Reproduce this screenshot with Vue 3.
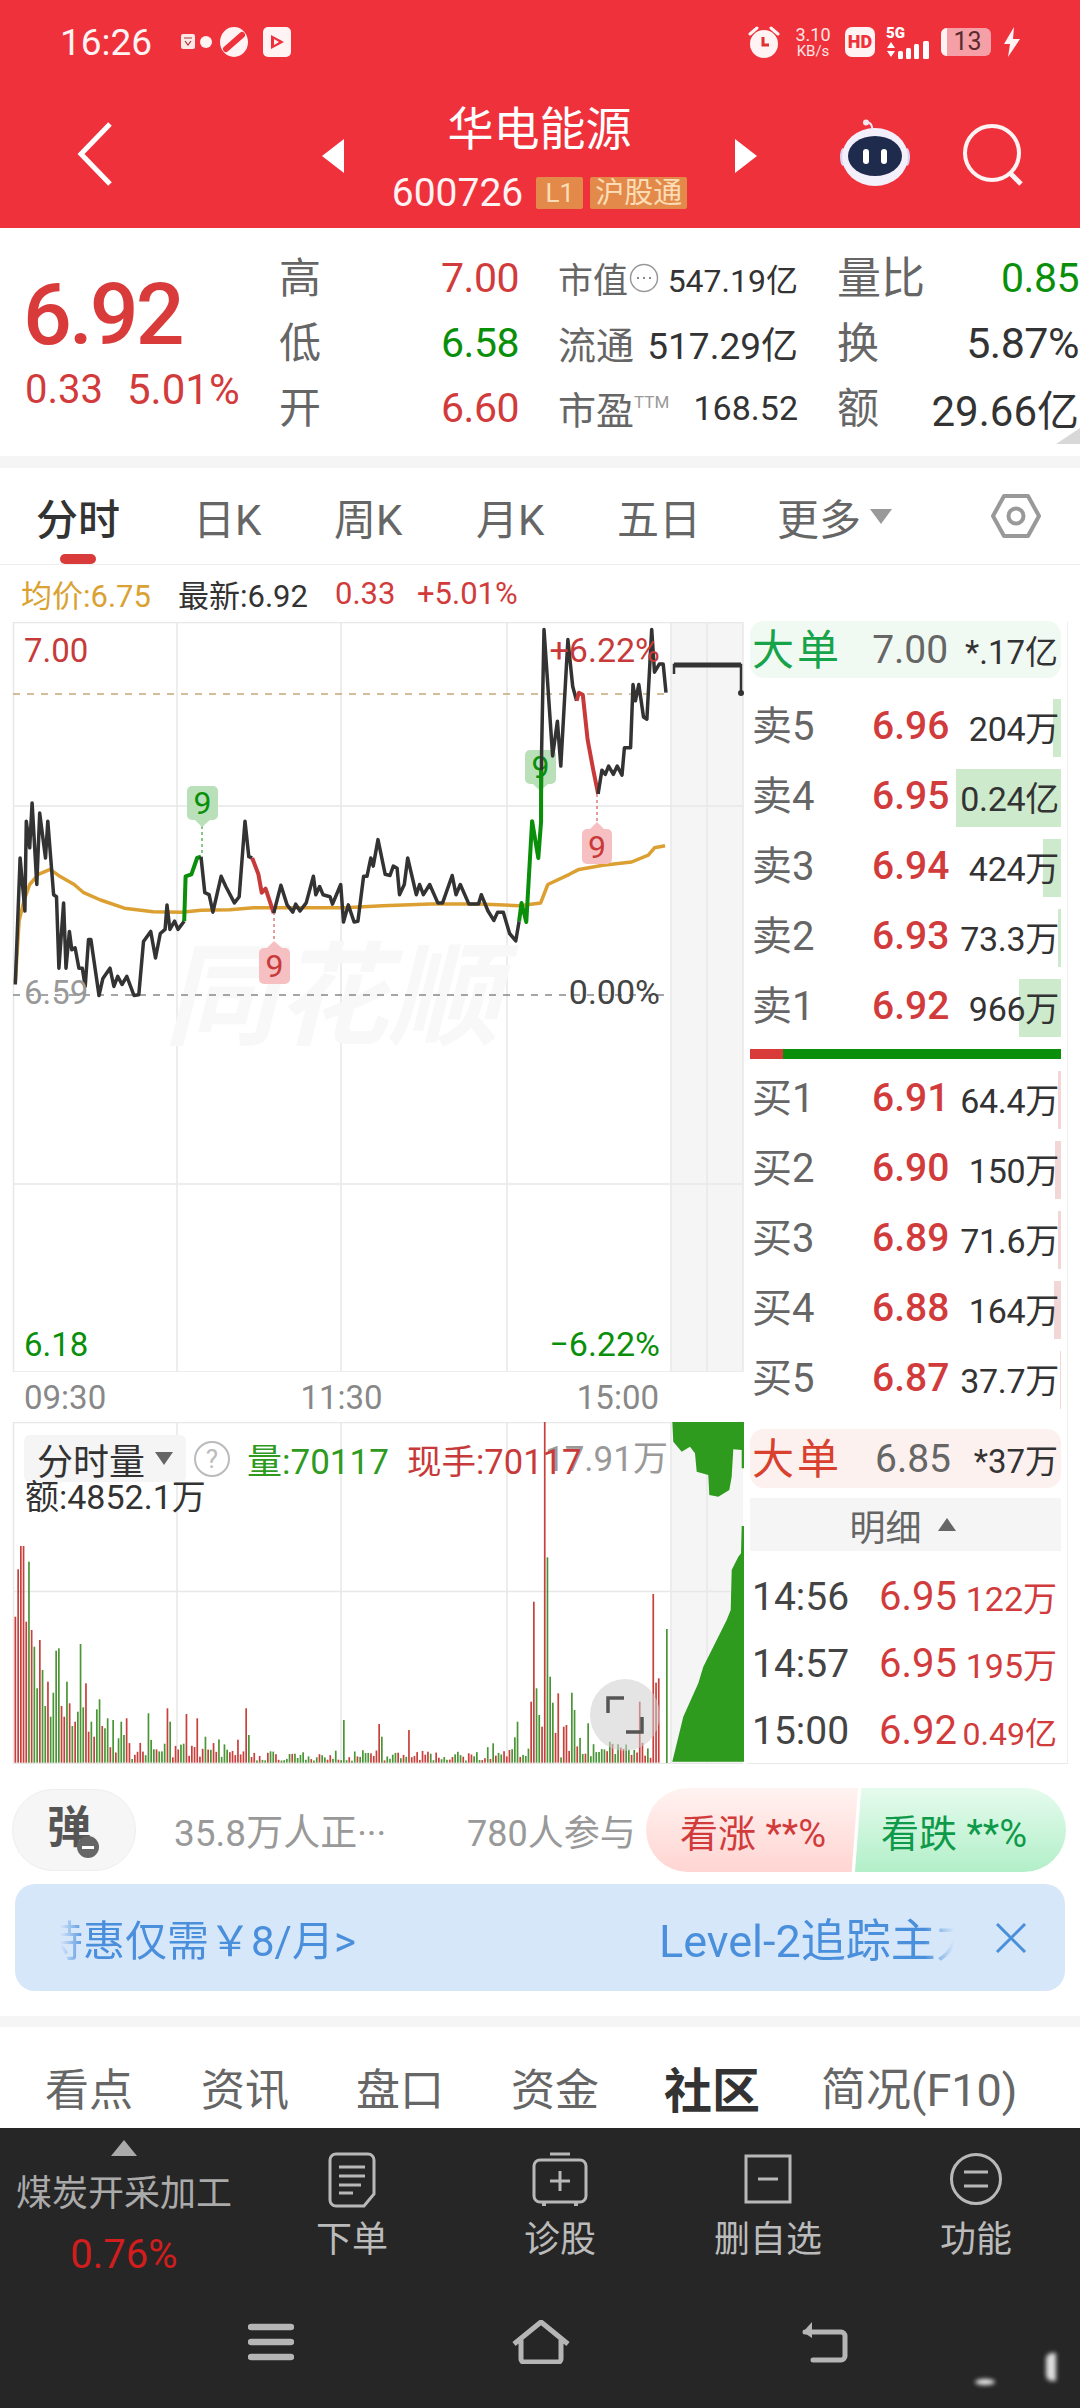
<script setup>
const zx = (x) => +(x / 2.09).toFixed(1)
const zy = (y) => +(460 + y / 2.45).toFixed(1)
const pts = (arr) => arr.map(([x, y]) => `${zx(x)},${zy(y)}`).join(' ')

const blackA = [[32,1285],[42,975],[52,1105],[55,885],[62,950],[67,840],[77,1040],[83,865],[95,975],[100,885],[112,1065],[118,1070],[123,1245],[133,1085],[138,1245],[145,1155],[150,1200],[157,1195],[165,1245],[172,1245],[178,1290],[185,1175],[190,1175],[207,1312],[215,1270],[230,1245],[238,1290],[246,1265],[255,1285],[265,1265],[280,1312],[290,1310],[300,1180],[315,1155],[325,1220],[335,1160],[345,1150],[349,1090],[355,1150],[365,1130],[372,1150],[385,1130]]
const greenA = [[385,1130],[388,1020],[400,1015],[412,975],[420,972]]
const blackB = [[420,972],[428,1060],[437,1065],[445,1108],[462,1020],[472,1045],[490,1085],[500,1070],[512,885],[520,972],[527,975]]
const redA = [[527,975],[540,1015],[547,1060],[555,1050],[572,1110]]
const blackC = [[572,1110],[587,1042],[600,1090],[612,1108],[618,1088],[627,1105],[640,1085],[655,1020],[660,1065],[668,1045],[675,1065],[690,1070],[695,1088],[712,1040],[718,1132],[728,1090],[740,1132],[748,1130],[760,1020],[767,1020],[775,975],[780,995],[790,930],[805,1015],[815,1018],[822,995],[830,1000],[835,1065],[845,1040],[852,975],[870,1065],[877,1040],[885,1065],[898,1040],[915,1085],[925,1085],[945,1018],[953,1065],[962,1040],[980,1088],[1000,1088],[1006,1065],[1020,1105],[1032,1128],[1040,1108],[1052,1108],[1065,1160],[1078,1178],[1085,1130]]
const greenB = [[1085,1130],[1090,1085],[1100,1132],[1112,885],[1125,975],[1131,885],[1131,760]]
const blackD = [[1131,885],[1132,715],[1137,415],[1155,725],[1165,640],[1172,750],[1187,440],[1197,555],[1205,590]]
const redB = [[1205,590],[1210,570],[1218,575],[1228,685],[1240,760],[1250,818]]
const blackE = [[1250,818],[1258,760],[1265,770],[1272,750],[1282,770],[1290,750],[1300,772],[1305,705],[1318,705],[1323,550],[1328,590],[1335,550],[1345,630],[1352,635],[1362,415],[1368,520],[1378,500],[1386,500],[1392,570]]
const avg = [[32,1280],[40,1130],[50,1080],[62,1040],[80,1015],[105,1003],[125,1020],[155,1040],[175,1060],[210,1078],[260,1098],[320,1107],[380,1108],[420,1103],[480,1102],[530,1097],[640,1097],[720,1097],[800,1092],[900,1088],[1000,1088],[1085,1092],[1130,1085],[1145,1040],[1190,1015],[1210,1003],[1260,993],[1320,985],[1355,968],[1368,950],[1390,945]]

const lines = [
  { cls: 'l-black', points: pts(blackA) },
  { cls: 'l-green', points: pts(greenA) },
  { cls: 'l-black', points: pts(blackB) },
  { cls: 'l-red', points: pts(redA) },
  { cls: 'l-black', points: pts(blackC) },
  { cls: 'l-black', points: pts(blackD) },
  { cls: 'l-green', points: pts(greenB) },
  { cls: 'l-red', points: pts(redB) },
  { cls: 'l-black', points: pts(blackE) },
]
const avgPoints = pts(avg)

const pins = [
  { x: 187, y: 786, w: 31, h: 34, tone: 'g', lx: 202, y1: 826, y2: 856, tip: '195,820 202,827 210,820' },
  { x: 259, y: 948, w: 31, h: 36, tone: 'r', lx: 274, y1: 912, y2: 942, tip: '267,948 274,941 282,948' },
  { x: 525, y: 750, w: 31, h: 34, tone: 'g', lx: 0, y1: 0, y2: 0, tip: '533,784 540,791 548,784' },
  { x: 582, y: 829, w: 30, h: 35, tone: 'r', lx: 597, y1: 794, y2: 823, tip: '590,829 597,822 604,829' },
]

// volume bars: x and top y in the zoomed scale of the measured crop
const R = 'r', G = 'g'
const peaks = [[30,650,R],[36,508,R],[42,438,R],[47,438,R],[53,665,R],[59,485,G],[65,690,R],[70,740,G],[76,865,G],[82,720,R],[87,810,G],[93,918,G],[98,845,R],[104,950,G],[110,878,G],[115,752,G],[121,745,G],[127,918,R],[132,950,R],[138,845,G],[144,910,R],[149,978,G],[155,965,R],[160,935,G],[166,732,G],[171,922,G],[177,850,R],[182,995,R],[188,965,G],[193,1010,R],[199,928,G],[205,898,G],[210,978,R],[220,955,G],[232,960,G],[248,965,G],[260,955,R],[305,940,G],[345,925,R],[350,965,G],[383,942,R],[407,955,R],[422,1010,G],[505,925,R],[512,1005,G],[708,960,G],[781,972,R],[786,1010,G],[842,990,R],[1015,1030,G],[1060,1012,G],[1066,965,G],[1093,905,R],[1100,605,R],[1105,865,G],[1110,945,G],[1116,980,R],[1121,62,R],[1127,472,G],[1133,830,G],[1139,908,G],[1149,880,R],[1160,980,R],[1166,975,R],[1177,878,G],[1183,930,G],[1212,970,G],[1316,905,R],[1345,582,R],[1350,848,R],[1356,835,R],[1373,688,G]]
let seed = 71
const rnd = () => { seed = (seed * 16807) % 2147483647; return seed / 2147483647 }
const baseTop = (x) => {
  if (x < 260) return 985
  if (x < 500) return 1015
  if (x < 1000) return 1050
  if (x < 1090) return 1040
  if (x < 1200) return 985
  if (x < 1362) return 1025
  return 1075
}
const bars = []
for (let x = 30; x <= 1362; x += 5.6) {
  const hit = peaks.find((p) => Math.abs(p[0] - x) < 2.8)
  const top = hit ? hit[1] : Math.min(1082, baseTop(x) + rnd() * (1088 - baseTop(x)) * 0.85)
  const tone = hit ? hit[2] : rnd() > 0.5 ? R : G
  bars.push({ x: +(x / 2.063).toFixed(1), y: +(1400 + top / 3).toFixed(1), h: +((1088 - top) / 3).toFixed(1), tone })
}
bars.push({ x: 666, y: 1629, h: 134, tone: G })

const fx = (x) => +(640 + x / 3).toFixed(1)
const fy = (y) => +(1400 + y / 3).toFixed(1)
const poly = (a) => a.map(([x, y]) => `${fx(x)},${fy(y)}`).join(' ')
const flowTop = poly([[97,63],[312,63],[312,205],[305,205],[305,150],[280,148],[275,230],[268,270],[235,290],[208,285],[205,225],[170,215],[165,160],[150,140],[125,155],[100,125]])
const flowBottom = poly([[97,1085],[130,950],[150,905],[175,850],[190,800],[215,750],[260,660],[272,630],[275,510],[295,470],[303,460],[305,378],[312,378],[312,1085]])

const quoteRows = [
  { a: '高', av: '7.00', at: 'red', b: '市值', bc: '', bv: '547.19亿', bs: 'b1', dots: true, c: '量比', cv: '0.85', ct: 'green', cs: 'c1' },
  { a: '低', av: '6.58', at: 'green', b: '流通', bc: 'wide', bv: '517.29亿', bs: 'b2', c: '换', cv: '5.87%', ct: 'dark', cs: 'c2' },
  { a: '开', av: '6.60', at: 'red', b: '市盈', bc: 'wide', bv: '168.52', bs: 'b3', ttm: true, c: '额', cv: '29.66亿', ct: 'dark', cs: 'c3' },
]
const sells = [
  { l: '卖5', p: '6.96', v: '204万', w: 8 },
  { l: '卖4', p: '6.95', v: '0.24亿', w: 105 },
  { l: '卖3', p: '6.94', v: '424万', w: 18 },
  { l: '卖2', p: '6.93', v: '73.3万', w: 3 },
  { l: '卖1', p: '6.92', v: '966万', w: 42 },
]
const buys = [
  { l: '买1', p: '6.91', v: '64.4万', w: 3 },
  { l: '买2', p: '6.90', v: '150万', w: 6 },
  { l: '买3', p: '6.89', v: '71.6万', w: 3 },
  { l: '买4', p: '6.88', v: '164万', w: 7 },
  { l: '买5', p: '6.87', v: '37.7万', w: 1 },
]
const ticks = [
  { t: '14:56', p: '6.95', v: '122万' },
  { t: '14:57', p: '6.95', v: '195万' },
  { t: '15:00', p: '6.92', v: '0.49亿', small: true },
]
const newsTabs = [
  { t: '看点' }, { t: '资讯' }, { t: '盘口' }, { t: '资金' }, { t: '社区', on: true }, { t: '简况(F10)' },
]
</script>

<template>
  <div class="page">
    <header class="top">
      <div class="status">
        <span class="time">16:26</span>
        <div class="st-left">
          <svg width="112" height="34" viewBox="0 0 112 34">
            <rect x="2" y="9" width="14" height="15" rx="2" fill="#fde8e8" />
            <path d="M5 13h8M6 16l3 4 3-4" stroke="#a33" stroke-width="1.2" fill="none" />
            <circle cx="27" cy="17" r="6" fill="#fff3f3" />
            <ellipse cx="55" cy="17" rx="14" ry="15" fill="#fff3f3" />
            <path d="M47 24L63 10" stroke="#ef313b" stroke-width="6" stroke-linecap="round" />
            <rect x="84" y="2" width="28" height="30" rx="5" fill="#fff3f3" />
            <path d="M92 10l13 7-13 7z" fill="#ef313b" />
            <path d="M95 14l5 3-5 3z" fill="#fff3f3" />
          </svg>
        </div>
        <div class="st-right">
          <svg class="alarm" width="34" height="34" viewBox="0 0 34 34">
            <circle cx="17" cy="19" r="14" fill="#fff3f3" />
            <path d="M3 9l7-6M31 9l-7-6" stroke="#fff3f3" stroke-width="3" stroke-linecap="round" />
            <path d="M16 12v8h6" stroke="#d33" stroke-width="3" fill="none" />
          </svg>
          <div class="speed"><span>3.10</span><span class="kb">KB/s</span></div>
          <span class="hd">HD</span>
          <div class="sig">
            <span class="five">5G</span>
            <svg width="46" height="18" viewBox="0 0 46 18">
              <path d="M1 7l4-6 4 6zM1 10l4 6 4-6z" fill="#fff" />
              <rect x="12" y="10" width="5" height="8" rx="1.5" fill="#fff" />
              <rect x="20" y="7" width="5" height="11" rx="1.5" fill="#fff" />
              <rect x="28" y="3" width="5" height="15" rx="1.5" fill="#fff" />
              <rect x="37" y="0" width="6" height="18" rx="1.5" fill="#fff" />
            </svg>
          </div>
          <div class="battery"><i class="cell"></i><span>13</span></div>
          <svg width="18" height="30" viewBox="0 0 18 30"><path d="M11 0L1 17h6l-2 13 12-18h-7z" fill="#fff3f3" /></svg>
        </div>
      </div>
      <div class="nav">
        <svg class="back" width="37" height="64" viewBox="0 0 37 64"><path d="M34 2L5 32l29 30" fill="none" stroke="#fff" stroke-width="5" /></svg>
        <svg class="tri-l" width="22" height="34" viewBox="0 0 22 34"><path d="M22 0v34L0 17z" fill="#fff" /></svg>
        <div class="title">
          <div class="name">华电能源</div>
          <div class="code"><span class="num">600726</span><span class="tag l1">L1</span><span class="tag hk">沪股通</span></div>
        </div>
        <svg class="tri-r" width="22" height="34" viewBox="0 0 22 34"><path d="M0 0v34l22-17z" fill="#fff" /></svg>
        <svg class="bot" width="74" height="68" viewBox="0 0 74 68">
          <path d="M34 12c1-5-1-8-5-9" fill="none" stroke="#e8e4f5" stroke-width="2" />
          <circle cx="28" cy="3.5" r="3" fill="#f4e8ee" />
          <ellipse cx="5" cy="38" rx="3" ry="9" fill="#d8d3f2" />
          <ellipse cx="69" cy="38" rx="3" ry="9" fill="#d8d3f2" />
          <ellipse cx="37" cy="38" rx="33" ry="29" fill="#f3f0fb" />
          <ellipse cx="37" cy="37" rx="27" ry="20" fill="#1f2b4d" />
          <rect x="25" y="30" width="6" height="15" rx="3" fill="#fff" />
          <rect x="43" y="30" width="6" height="15" rx="3" fill="#fff" />
        </svg>
        <svg class="search" width="64" height="64" viewBox="0 0 64 64">
          <circle cx="30" cy="30" r="27" fill="none" stroke="#fff3f3" stroke-width="4" />
          <path d="M48 50l11 11" stroke="#fff3f3" stroke-width="5" />
        </svg>
      </div>
    </header>

    <section class="quote">
      <div class="now">
        <div class="big">6.92</div>
        <div class="chg"><span>0.33</span><span class="pct">5.01%</span></div>
      </div>
      <div class="qgrid">
        <template v-for="r in quoteRows" :key="r.a">
          <div class="qc"><span class="lab-l">{{ r.a }}</span><span class="qv" :class="r.at">{{ r.av }}</span></div>
          <div class="qc">
            <span class="lab-m" :class="r.bc">{{ r.b }}<svg v-if="r.dots" class="dots" width="30" height="30" viewBox="0 0 30 30"><circle cx="15" cy="15" r="13.5" fill="none" stroke="#999" stroke-width="1.5" /><path d="M8 15h2M14 15h2M20 15h2" stroke="#888" stroke-width="2" /></svg><sup v-if="r.ttm" class="ttm">TTM</sup></span>
            <span class="dark" :class="r.bs">{{ r.bv }}</span>
          </div>
          <div class="qc"><span class="lab-l" :class="{ wide2: r.c === '量比' }">{{ r.c }}</span><span :class="[r.ct, r.cs]">{{ r.cv }}</span></div>
        </template>
      </div>
      <i class="fold"></i>
    </section>
    <div class="sep"></div>

    <nav class="tabs">
      <span class="tab on">分时</span>
      <span class="tab t2">日K</span>
      <span class="tab t3">周K</span>
      <span class="tab t4">月K</span>
      <span class="tab t5">五日</span>
      <span class="tab t6">更多<i class="tri-d"></i></span>
      <svg class="hex" width="52" height="46" viewBox="0 0 52 46">
        <path d="M14 3h24l11 20-11 20H14L3 23z" fill="none" stroke="#999" stroke-width="4" stroke-linejoin="round" />
        <circle cx="26" cy="23" r="7.5" fill="none" stroke="#999" stroke-width="4" />
      </svg>
      <i class="under"></i>
    </nav>

    <div class="legend">
      <span class="gold">均价:6.75</span>
      <span class="dk">最新:6.92</span>
      <span class="rd r1">0.33</span>
      <span class="rd r2">+5.01%</span>
    </div>

    <div class="market">
      <div class="charts">
        <svg class="price" width="747" height="750" viewBox="0 622 747 750">
          <rect x="671" y="622" width="72" height="750" fill="#f5f5f5" />
          <g class="grid">
            <path d="M13.5 622V1372M177 622V1372M341 622V1372M507 622V1372M671 622V1372M707 622V1372M743 622V1372M13 622.5H743M13 806H743M13 1184H743M13 1372H743" />
          </g>
          <text class="wm" x="164" y="1036">同花顺</text>
          <path d="M13 694H666" class="dash-o" />
          <path d="M13 995H666" class="dash-g" />
          <polyline :points="avgPoints" class="l-avg" />
          <g v-for="(p, i) in pins" :key="'p' + i">
            <path v-if="p.y2" :d="`M${p.lx} ${p.y1}V${p.y2}`" :class="p.tone === 'g' ? 'pin-lg' : 'pin-lr'" />
            <rect :x="p.x" :y="p.y" :width="p.w" :height="p.h" rx="5" :class="p.tone === 'g' ? 'pin-g' : 'pin-r'" />
            <polygon :points="p.tip" :class="p.tone === 'g' ? 'pin-g' : 'pin-r'" />
            <text :x="p.x + p.w / 2" :y="p.y + p.h / 2 + 11" text-anchor="middle" class="pin-t" :class="p.tone === 'g' ? 'tg' : 'tr'">9</text>
          </g>
          <polyline v-for="(l, i) in lines" :key="i" :points="l.points" :class="l.cls" />
          <path d="M674 674V665H741V693" class="bracket" />
          <path d="M674 665H741" class="bracket-top" />
          <circle cx="741" cy="693" r="3" fill="#333" />
          <text class="lb tr" x="24" y="662">7.00</text>
          <text class="lb lb2 tr" x="660" y="662" text-anchor="end">+6.22%</text>
          <text class="lb tgray" x="24" y="1004">6.59</text>
          <text class="lb lb2 tdk" x="660" y="1004" text-anchor="end">0.00%</text>
          <text class="lb tg" x="24" y="1356">6.18</text>
          <text class="lb lb2 tg" x="660" y="1356" text-anchor="end">−6.22%</text>
        </svg>
        <div class="times"><span>09:30</span><span>11:30</span><span>15:00</span></div>
        <div class="vol">
          <svg class="volsvg" width="747" height="342" viewBox="0 1422 747 342">
            <rect x="671" y="1422" width="72" height="342" fill="#f5f5f5" />
            <g class="grid">
              <path d="M13.5 1422V1764M177 1422V1764M341 1422V1764M507 1422V1764M671 1422V1764M707 1422V1764M13 1422.5H743M13 1591.5H743M13 1763.5H743" />
            </g>
            <rect v-for="(b, i) in bars" :key="i" :x="b.x" :y="b.y" width="1.7" :height="b.h" :class="b.tone === 'r' ? 'bar-r' : 'bar-g'" />
            <polygon :points="flowTop" class="flow" />
            <polygon :points="flowBottom" class="flow" />
          </svg>
          <span class="maxv">17.91万</span>
          <div class="volhead">
            <span class="chip">分时量<i class="tri-s"></i></span>
            <span class="q">?</span>
            <span class="v-g">量:70117</span>
            <span class="v-r">现手:70117</span>
          </div>
          <span class="amt">额:4852.1万</span>
          <div class="full">
            <svg width="38" height="38" viewBox="0 0 38 38"><path d="M2 17V2h16M36 21v15H20" fill="none" stroke="#555" stroke-width="3.5" /></svg>
          </div>
        </div>
      </div>

      <aside class="book">
        <div class="big-row up"><span class="bl">大单</span><span class="bp gy">7.00</span><span class="bv">*.17亿</span></div>
        <div class="side sells">
          <div v-for="r in sells" :key="r.l" class="row">
            <i class="depth dg" :style="{ width: r.w + 'px' }"></i>
            <span class="rl">{{ r.l }}</span><span class="rp">{{ r.p }}</span><span class="rv">{{ r.v }}</span>
          </div>
        </div>
        <div class="ratio"><i class="ratio-r"></i></div>
        <div class="side">
          <div v-for="r in buys" :key="r.l" class="row">
            <i class="depth dr" :style="{ width: r.w + 'px' }"></i>
            <span class="rl">{{ r.l }}</span><span class="rp">{{ r.p }}</span><span class="rv">{{ r.v }}</span>
          </div>
        </div>
        <div class="big-row down"><span class="bl">大单</span><span class="bp gy">6.85</span><span class="bv">*37万</span></div>
        <div class="detail">明细<i class="tri-u"></i></div>
        <div class="ticks">
          <div v-for="t in ticks" :key="t.t" class="tick">
            <span class="tt">{{ t.t }}</span><span class="tp">{{ t.p }}</span><span class="tv" :class="{ small: t.small }">{{ t.v }}</span>
          </div>
        </div>
      </aside>
    </div>

    <div class="social">
      <div class="dan">弹<i class="minus"></i></div>
      <span class="watch">35.8万人正···</span>
      <span class="join">780人参与</span>
      <div class="vote">
        <span class="up-v">看涨 **%</span>
        <span class="down-v">看跌 **%</span>
      </div>
    </div>

    <div class="banner">
      <div class="marquee">
        <span class="m1">特惠仅需￥8/月&gt;</span>
        <span class="m2">Level-2追踪主力</span>
      </div>
      <svg class="close" width="32" height="30" viewBox="0 0 32 30"><path d="M2 1l28 28M30 1L2 29" stroke="#4a8fdb" stroke-width="3" /></svg>
    </div>
    <div class="sep s2"></div>

    <div class="news">
      <span v-for="t in newsTabs" :key="t.t" class="nt" :class="{ on: t.on }">{{ t.t }}</span>
    </div>

    <footer class="bottom">
      <div class="actions">
        <div class="sector">
          <i class="tri-up"></i>
          <span class="sname">煤炭开采加工</span>
          <span class="spct">0.76%</span>
        </div>
        <div class="act">
          <svg width="48" height="56" viewBox="0 0 48 56"><path d="M8 2h32a6 6 0 0 1 6 6v34L36 54H8a6 6 0 0 1-6-6V8a6 6 0 0 1 6-6z" fill="none" stroke="#b8b8b8" stroke-width="3" /><path d="M11 15h26M11 24h26M11 33h22M11 41h14" stroke="#b8b8b8" stroke-width="3" /></svg>
          <span>下单</span>
        </div>
        <div class="act">
          <svg width="56" height="56" viewBox="0 0 56 56"><path d="M18 2h20" stroke="#b8b8b8" stroke-width="3" /><rect x="2" y="8" width="52" height="42" rx="6" fill="none" stroke="#b8b8b8" stroke-width="3" /><path d="M28 19v20M18 29h20" stroke="#b8b8b8" stroke-width="3" /><path d="M12 50v4M44 50v4" stroke="#b8b8b8" stroke-width="4" /></svg>
          <span>诊股</span>
        </div>
        <div class="act">
          <svg width="48" height="56" viewBox="0 0 48 56"><rect x="2" y="4" width="44" height="46" fill="none" stroke="#b8b8b8" stroke-width="3" /><path d="M14 27h20" stroke="#b8b8b8" stroke-width="3" /></svg>
          <span>删自选</span>
        </div>
        <div class="act">
          <svg width="54" height="56" viewBox="0 0 54 56"><circle cx="27" cy="27" r="24.5" fill="none" stroke="#b8b8b8" stroke-width="3" /><path d="M15 20h24M15 34h24" stroke="#b8b8b8" stroke-width="3" /></svg>
          <span>功能</span>
        </div>
      </div>
      <div class="sysnav">
        <svg class="s-menu" width="46" height="38" viewBox="0 0 46 38"><path d="M3 4h40M3 19h40M3 34h40" stroke="#b5b5b5" stroke-width="6.5" stroke-linecap="round" /></svg>
        <svg class="s-home" width="58" height="44" viewBox="0 0 58 44"><path d="M2 24L29 2l27 22M9 20v19a3 3 0 0 0 3 3h34a3 3 0 0 0 3-3V20" fill="none" stroke="#b5b5b5" stroke-width="5" stroke-linejoin="round" /></svg>
        <svg class="s-back" width="48" height="44" viewBox="0 0 48 44"><path d="M4 12h36a4 4 0 0 1 4 4v20a4 4 0 0 1-4 4H12" fill="none" stroke="#b5b5b5" stroke-width="5" stroke-linecap="round" /><path d="M2 12l9-10v16z" fill="#b5b5b5" /></svg>
      </div>
      <i class="blur-a"></i>
      <i class="blur-b"></i>
    </footer>
  </div>
</template>

<style scoped>
.page {
  width: 1080px;
  height: 2408px;
  overflow: hidden;
  display: flex;
  flex-direction: column;
  background: #fff;
  font-family: Roboto, "Noto Sans CJK SC", sans-serif;
  color: #333;
}
i { display: block; font-style: normal; }

/* header */
.top { height: 228px; background: #ef313b; color: #fff; flex: none; }
.status { height: 84px; display: flex; align-items: center; padding: 0 60px; position: relative; }
.time { font-size: 37px; color: #fff3f3; width: 120px; }
.st-left { margin-left: -1px; display: flex; }
.st-right { display: flex; align-items: center; position: absolute; left: 747px; top: 24px; height: 36px; }
.speed { display: flex; flex-direction: column; margin-left: 13px; width: 38px; font-size: 18px; line-height: 19px; color: #fde5e5; text-align: center; align-items: center; }
.kb { font-size: 15px; line-height: 15px; }
.hd { margin-left: 13px; width: 30px; height: 30px; border-radius: 7px; background: #fff3f3; color: #ef313b; font-size: 18px; font-weight: 900; line-height: 30px; text-align: center; }
.sig { margin-left: 11px; width: 46px; display: flex; flex-direction: column; }
.five { font-size: 15px; line-height: 15px; font-weight: 900; }
.battery { margin-left: 9px; width: 50px; height: 28px; border-radius: 6px; background: #f5a0a6; position: relative; text-align: center; font-size: 25px; line-height: 28px; color: #5a2a2e; margin-right: 12px; padding-left: 3px; box-sizing: border-box; }
.cell { position: absolute; left: 0; top: 0; bottom: 0; width: 6px; background: #fff3f3; border-radius: 6px 0 0 6px; }
.nav { height: 144px; display: flex; align-items: center; position: relative; }
.back { margin-left: 76px; margin-top: -4px; }
.tri-l { margin-left: 209px; }
.title { width: 391px; text-align: center; display: flex; flex-direction: column; align-items: center; margin-top: -2px; }
.name { font-size: 46px; line-height: 60px; color: #fff; margin-top: 0; }
.code { display: flex; align-items: center; margin-top: 16px; height: 36px; }
.num { font-size: 39px; color: #fff3f3; margin-right: 13px; }
.tag { background: #e38a4a; color: #fbdcb5; height: 32px; line-height: 32px; border-radius: 2px; font-size: 26px; text-align: center; }
.l1 { width: 47px; margin-right: 7px; }
.hk { width: 97px; font-size: 29px; }
.bot { margin-left: 81px; margin-top: -6px; }
.search { margin-left: 50px; margin-top: -2px; }

/* quote */
.quote { height: 228px; display: flex; flex: none; position: relative; }
.now { width: 279px; padding: 44px 0 0 23px; box-sizing: border-box; }
.big { font-size: 86px; line-height: 86px; letter-spacing: -3px; color: #d93b3b; font-weight: 500; }
.chg { display: flex; gap: 24px; margin-top: 9px; font-size: 40px; line-height: 46px; color: #d23b3b; white-space: nowrap; padding-left: 2px; }
.pct { font-size: 42px; }
.qgrid { display: grid; grid-template-columns: 240px 240px 242px; column-gap: 39px; grid-auto-rows: 65px; padding-top: 17px; }
.qc { display: flex; justify-content: space-between; align-items: center; white-space: nowrap; }
.lab-l { font-size: 42px; color: #666; position: relative; top: -3px; }
.wide2 { font-size: 44px; }
.lab-m { font-size: 35px; color: #666; display: flex; align-items: center; }
.wide { font-size: 38px; }
.dots { margin-left: 1px; }
.ttm { font-size: 17px; color: #999; margin: -12px 0 0 0; }
.qv { font-size: 41px; letter-spacing: -.5px; }
.red { color: #d23b3b; }
.green { color: #0a8f0a; }
.dark { color: #333; }
.b1 { font-size: 32px; }
.b2 { font-size: 37px; }
.b3 { font-size: 34px; }
.c1 { font-size: 41px; letter-spacing: -.5px; }
.c2 { font-size: 43px; letter-spacing: -.5px; }
.c3 { font-size: 42px; }
.fold { position: absolute; right: 0; bottom: 12px; width: 0; height: 0; border-left: 24px solid transparent; border-bottom: 16px solid #d8d8d8; }
.sep { height: 12px; background: #f5f5f5; flex: none; }

/* tabs */
.tabs { height: 97px; flex: none; border-bottom: 1px solid #eee; box-sizing: border-box; display: flex; align-items: center; position: relative; padding-left: 36px; font-size: 42px; color: #666; }
.tab { white-space: nowrap; display: flex; align-items: center; }
.tab.on { color: #333; font-weight: 500; width: 84px; }
.t2 { margin-left: 73px; width: 70px; }
.t3 { margin-left: 71px; width: 70px; }
.t4 { margin-left: 72px; width: 70px; }
.t5 { margin-left: 71px; width: 84px; }
.t6 { margin-left: 76px; }
.tri-d { width: 0; height: 0; margin-left: 9px; border: 11px solid transparent; border-top: 15px solid #999; border-bottom: 0; }
.hex { margin-left: 98px; }
.under { position: absolute; left: 60px; bottom: 0; width: 36px; height: 10px; border-radius: 5px; background: #d93b3b; }
.legend { height: 57px; flex: none; display: flex; align-items: center; padding-left: 21px; font-size: 31px; white-space: nowrap; }
.gold { color: #d9a232; width: 157px; }
.dk { color: #333; width: 157px; }
.r1 { width: 82px; }
.rd { color: #d23b3b; }

/* market */
.market { height: 1142px; flex: none; display: flex; }
.charts { width: 747px; flex: none; }
.price { display: block; }
.grid path { fill: none; stroke: #e8e8e8; stroke-width: 1.5; }
.wm { font-size: 112px; font-weight: 700; font-style: italic; fill: #f8f8f8; }
.dash-o { stroke: #c9a878; stroke-width: 1.5; stroke-dasharray: 7 7; }
.dash-g { stroke: #888; stroke-width: 1.5; stroke-dasharray: 7 7; }
polyline { fill: none; stroke-linejoin: round; }
.l-black { stroke: #333; stroke-width: 3.5; }
.l-green { stroke: #0a8f0a; stroke-width: 4; }
.l-red { stroke: #c83a3a; stroke-width: 4; }
.l-avg { stroke: #dca032; stroke-width: 3.5; }
.pin-g { fill: #b9e0b9; }
.pin-r { fill: #f6c0c3; }
.pin-lg { stroke: #0a8f0a; stroke-width: 1; stroke-dasharray: 3 3; }
.pin-lr { stroke: #c83a3a; stroke-width: 1; stroke-dasharray: 3 3; }
.pin-t { font-size: 32px; }
.tg { fill: #0a8f0a; }
.tr { fill: #c83a3a; }
.bracket { fill: none; stroke: #333; stroke-width: 2.5; }
.bracket-top { stroke: #333; stroke-width: 5; }
.lb { font-size: 33px; }
.lb2 { font-size: 34px; }
.tgray { fill: #999; }
.tdk { fill: #444; }
.times { height: 50px; display: flex; justify-content: space-between; align-items: center; padding: 0 88px 0 24px; font-size: 33px; color: #888; }
.vol { height: 342px; position: relative; }
.volsvg { display: block; }
.bar-r { fill: #c8403c; }
.bar-g { fill: #4a9636; }
.flow { fill: #2e9a1e; }
.volhead { position: absolute; left: 24px; top: 11px; display: flex; align-items: center; font-size: 35px; white-space: nowrap; }
.chip { width: 162px; height: 47px; background: #f5f5f5; border-radius: 6px; font-size: 36px; display: flex; align-items: center; padding-left: 13px; box-sizing: border-box; color: #333; }
.tri-s { width: 0; height: 0; margin-left: 10px; border: 9px solid transparent; border-top: 13px solid #666; border-bottom: 0; }
.q { margin-left: 8px; width: 32px; height: 32px; border: 2px solid #bbb; border-radius: 50%; color: #bbb; text-align: center; font-size: 26px; line-height: 32px; }
.v-g { margin-left: 17px; width: 160px; color: #2e9a1e; }
.v-r { color: #c83a3a; font-size: 34.5px; }
.maxv { position: absolute; left: 545px; top: 8px; font-size: 35px; color: #999; white-space: nowrap; }
.amt { position: absolute; left: 25px; top: 55px; font-size: 34px; line-height: 40px; color: #333; white-space: nowrap; }
.full { position: absolute; left: 590px; top: 257px; width: 70px; height: 72px; border-radius: 50%; background: rgba(205, 205, 205, .55); display: flex; align-items: center; justify-content: center; }

/* book */
.book { width: 321px; flex: none; border-right: 1px solid #eee; border-bottom: 1px solid #e8e8e8; box-sizing: border-box; padding: 0 6px 0 3px; height: 1142px; }
.big-row { height: 57px; border-radius: 14px; display: flex; align-items: center; white-space: nowrap; padding: 0 3px 0 2px; position: relative; }
.big-row.up { background: #f1f9f3; margin-top: -1px; }
.big-row.down { background: #fdf1f0; margin-top: 16px; height: 59px; }
.bl { font-size: 42px; width: 123px; letter-spacing: 3px; position: relative; top: -3px; }
.up .bl { color: #16a34a; }
.down .bl { color: #d9402e; }
.bp { font-size: 39px; width: 95px; }
.gy { color: #666; }
.bv { margin-left: auto; font-size: 33px; color: #333; }
.side { height: 350px; }
.sells { margin-top: 13px; }
.row { height: 70px; display: flex; align-items: center; position: relative; white-space: nowrap; padding: 0 2px; }
.depth { position: absolute; right: 0; top: 8px; height: 58px; }
.dg { background: #cdeacd; }
.dr { background: #f3d6d6; }
.rl { font-size: 40px; color: #666; width: 120px; position: relative; top: -3px; }
.rp { font-size: 39px; font-weight: 500; color: #d23b3b; position: relative; }
.rv { margin-left: auto; font-size: 34px; color: #333; position: relative; letter-spacing: -.3px; }
.ratio { height: 10px; margin: 8px 0 4px; background: #0a8f0a; }
.ratio-r { width: 33px; height: 10px; background: #d93b3b; }
.detail { height: 53px; margin-top: 10px; background: #f5f5f5; display: flex; align-items: center; justify-content: center; font-size: 36px; color: #666; padding-right: 6px; box-sizing: border-box; }
.tri-u { width: 0; height: 0; margin-left: 16px; border: 9px solid transparent; border-bottom: 13px solid #666; border-top: 0; }
.ticks { padding-top: 12px; }
.tick { height: 67px; display: flex; align-items: center; white-space: nowrap; padding: 0 4px 0 2px; }
.tt { font-size: 39px; color: #444; width: 127px; }
.tp { font-size: 40px; color: #d23b3b; }
.tv { margin-left: auto; font-size: 34px; color: #d23b3b; }
.tv.small { font-size: 32px; }

/* social */
.social { height: 84px; margin-top: 24px; flex: none; display: flex; align-items: center; padding-left: 12px; position: relative; white-space: nowrap; }
.dan { width: 124px; height: 82px; box-sizing: border-box; border: 1px solid #eee; border-radius: 41px; background: #f6f6f6; font-size: 44px; font-weight: 700; color: #555; text-align: center; line-height: 76px; padding-right: 10px; position: relative; }
.minus { position: absolute; left: 64px; top: 46px; width: 22px; height: 22px; border-radius: 50%; background: #666 linear-gradient(#fff, #fff) center / 12px 3px no-repeat; }
.watch { margin-left: 38px; width: 293px; font-size: 37px; color: #999; }
.join { font-size: 36px; color: #999; width: 179px; }
.vote { display: flex; width: 420px; height: 84px; font-size: 38px; }
.up-v, .down-v { display: flex; align-items: center; height: 84px; }
.up-v { width: 212px; padding-left: 34px; box-sizing: border-box; border-radius: 42px 0 0 42px; background: linear-gradient(#fff3f1, #ffd5d2); color: #d23b3b; clip-path: polygon(0 0, 100% 0, 97% 100%, 0 100%); }
.down-v { width: 211px; margin-left: -3px; padding-left: 26px; box-sizing: border-box; border-radius: 0 42px 42px 0; background: linear-gradient(#e6fbee, #b2efc8); color: #0e9a4a; clip-path: polygon(3% 0, 100% 0, 100% 100%, 0 100%); }

/* banner */
.banner { height: 107px; margin: 12px 15px 0; flex: none; background: #d7e7fa; border-radius: 20px; display: flex; align-items: center; position: relative; padding-left: 45px; }
.marquee { width: 894px; overflow: hidden; white-space: nowrap; display: flex; align-items: center; font-size: 42px; color: #4a8fdb; -webkit-mask-image: linear-gradient(90deg, transparent 0, #000 25px, #000 865px, transparent 894px); mask-image: linear-gradient(90deg, transparent 0, #000 25px, #000 865px, transparent 894px); }
.m1 { margin-left: -19px; flex: none; }
.m2 { margin-left: 303px; flex: none; font-size: 45px; }
.close { margin-left: 41px; }
.s2 { margin-top: 25px; height: 11px; }

/* news tabs */
.news { height: 101px; flex: none; display: flex; align-items: center; white-space: nowrap; font-size: 44px; color: #666; padding: 18px 0 0 45px; box-sizing: border-box; }
.nt { margin-right: 68px; }
.nt:nth-child(n+2) { margin-right: 67px; }
.nt:nth-child(4) { margin-right: 65px; }
.nt.on { font-size: 48px; font-weight: 700; color: #333; margin-right: 61px; }
.nt:last-child { font-size: 45px; }

/* footer */
.bottom { flex: 1; background: #262626; position: relative; }
.actions { height: 176px; display: flex; }
.sector { width: 248px; flex: none; display: flex; flex-direction: column; align-items: center; color: #aaa; }
.tri-up { width: 0; height: 0; margin-top: 12px; border: 13px solid transparent; border-bottom: 16px solid #aaa; border-top: 0; }
.sname { margin-top: 16px; font-size: 36px; line-height: 44px; white-space: nowrap; }
.spct { margin-top: 17px; font-size: 40px; line-height: 44px; color: #d11d1d; }
.act { width: 208px; flex: none; display: flex; flex-direction: column; align-items: center; padding-top: 24px; box-sizing: border-box; color: #bbb; font-size: 36px; }
.act span { margin-top: 8px; line-height: 48px; }
.sysnav { display: flex; align-items: center; height: 44px; margin-top: 16px; padding-left: 248px; }
.s-home { margin-left: 218px; }
.s-back { margin-left: 231px; }
.blur-a { position: absolute; left: 975px; top: 251px; width: 20px; height: 6px; border-radius: 50%; background: #eee; filter: blur(2px); }
.blur-b { position: absolute; left: 1046px; top: 225px; width: 10px; height: 28px; background: #ddd; filter: blur(2px); border-radius: 6px 0 0 6px; }
</style>
